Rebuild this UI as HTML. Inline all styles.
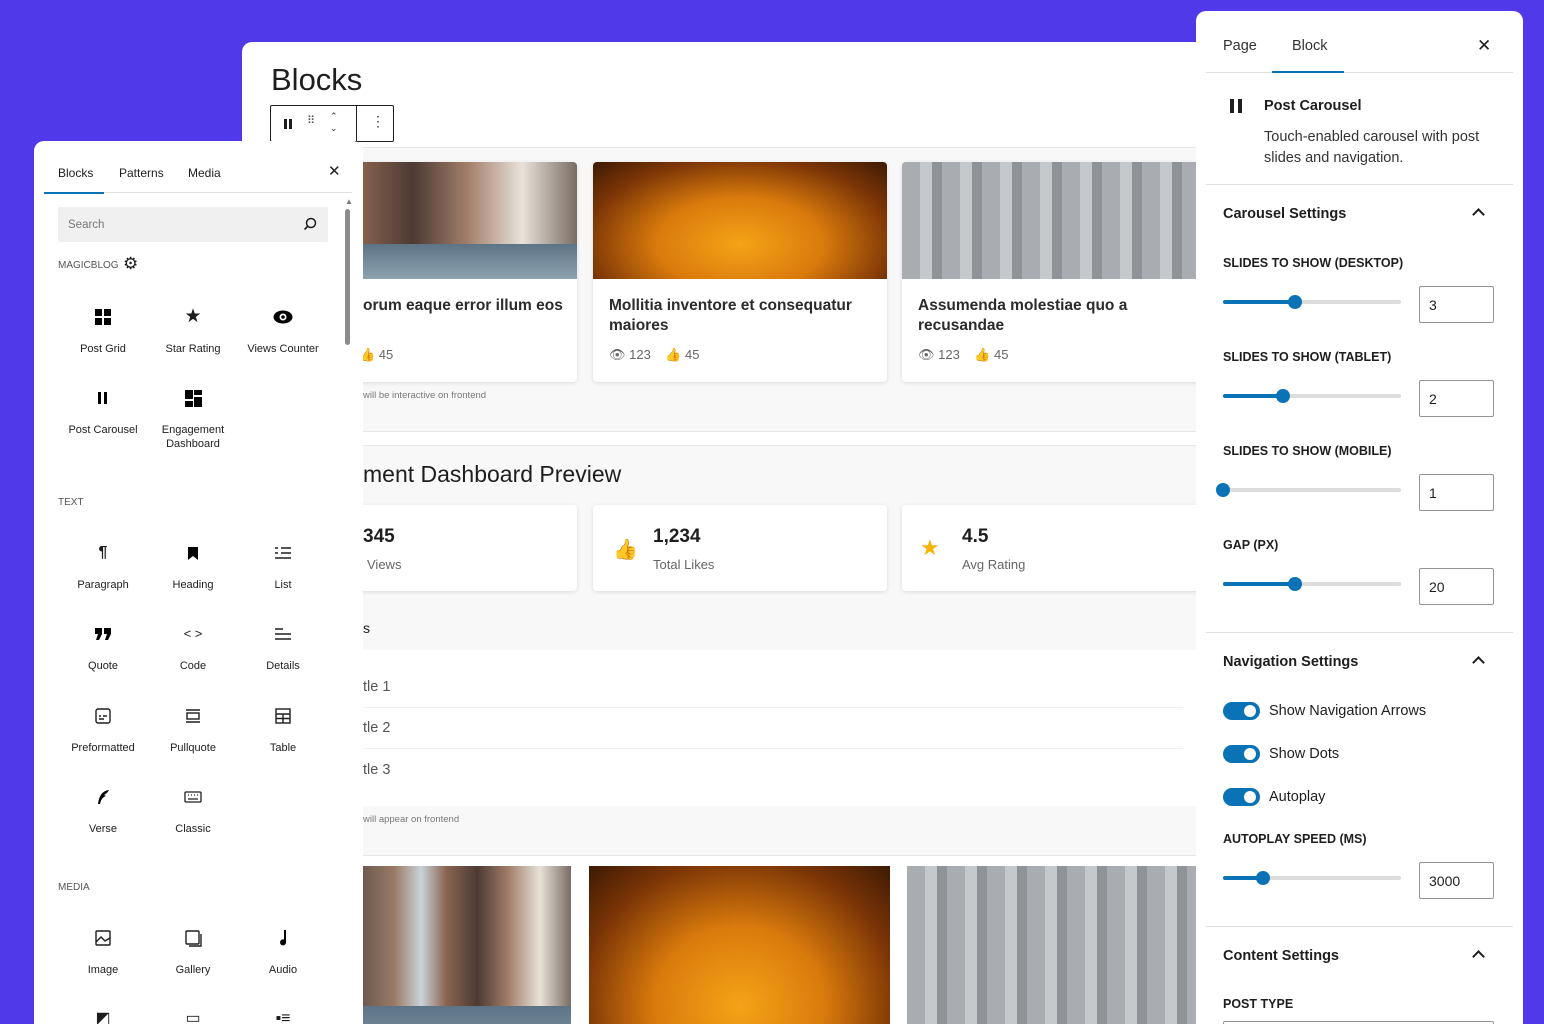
<!DOCTYPE html>
<html><head><meta charset="utf-8"><style>
*{box-sizing:border-box;margin:0;padding:0}
html,body{width:1544px;height:1024px;overflow:hidden}
body{background:#5039e9;font-family:"Liberation Sans",sans-serif;position:relative;color:#1e1e1e}
.a{position:absolute}
#ed{left:242px;top:42px;width:1000px;height:982px;background:#fff;border-radius:10px 0 0 0;overflow:hidden}
.card{position:absolute;background:#fff;border-radius:4px;box-shadow:0 1px 4px rgba(0,0,0,.12);overflow:hidden}
.ct{font-size:15.5px;color:#2b2b2b;line-height:20px;position:absolute;left:16px;top:134px;width:260px;font-weight:600}
.meta{position:absolute;left:16px;top:185px;font-size:13px;color:#666}
.street{background:linear-gradient(90deg,#6d5a4f 0%,#9a7a66 15%,#c9d2d8 28%,#8a6450 40%,#4d3a33 55%,#a27e6a 70%,#e8e2da 85%,#7a6c63 100%)}
.street::after{content:"";position:absolute;left:0;right:0;bottom:0;height:30%;background:linear-gradient(180deg,#5d7486,#8ea2b0)}
.bench{background:radial-gradient(ellipse at 50% 70%,#f5a317 0%,#d97a0c 40%,#7a3406 75%,#3c1a04 100%)}
.wall{background:repeating-linear-gradient(90deg,#a9adb2 0 18px,#c6c9cc 18px 30px,#8f9398 30px 40px),#b5b8bc}
#lp{left:34px;top:141px;width:329px;height:883px;background:#fff;border-radius:10px 10px 0 0;overflow:hidden}
.tab{position:absolute;font-size:12px;color:#1e1e1e}
.blk{position:absolute;width:90px;text-align:center;font-size:11px;color:#1e1e1e;line-height:14px}
.blk .ic{height:22px;display:flex;justify-content:center;align-items:center;margin-bottom:14px;font-size:16px}
.sec{position:absolute;left:24px;font-size:10px;color:#555}
#rp{left:1196px;top:11px;width:327px;height:1013px;background:#fff;border-radius:10px 10px 0 0;overflow:hidden}
.lbl{position:absolute;left:27px;font-size:12.5px;font-weight:600;color:#1e1e1e}
.h{position:absolute;left:27px;font-size:14.5px;font-weight:600;color:#1e1e1e}
.chev{position:absolute;left:278px;width:9px;height:9px;border-left:2px solid #1e1e1e;border-top:2px solid #1e1e1e;transform:rotate(45deg)}
.sl{position:absolute;left:27px;width:178px;height:4px;background:#ddd;border-radius:2px}
.sl i{position:absolute;left:0;top:0;height:4px;background:#0a73b6;border-radius:2px}
.sl b{position:absolute;top:-5px;width:14px;height:14px;border-radius:50%;background:#0a73b6}
.inp{position:absolute;left:223px;width:75px;height:37px;border:1px solid #949494;border-radius:2px;font-size:14px;padding:10px 9px;color:#1e1e1e}
.hr{position:absolute;left:10px;right:10px;height:1px;background:#e0e0e0}
.tg{position:absolute;left:27px;width:37px;height:18px;border-radius:9px;background:#0a73b6}
.tg::after{content:"";position:absolute;right:4px;top:3px;width:12px;height:12px;border-radius:50%;background:#fff}
.tgl{position:absolute;left:73px;font-size:14.5px;color:#1e1e1e}
</style></head><body>

<div id="ed" class="a">
  <div class="a" style="left:29px;top:20px;font-size:31px;color:#1e1e1e;font-weight:500">Blocks</div>
  <div class="a" style="left:28px;top:63px;width:124px;height:37px;border:1px solid #1e1e1e;border-radius:2px;background:#fff">
    <div class="a" style="left:13px;top:13px;width:3px;height:10px;background:#1e1e1e"></div>
    <div class="a" style="left:18px;top:13px;width:3px;height:10px;background:#1e1e1e"></div>
    <div class="a" style="left:36px;top:8px;font-size:11px;color:#555;letter-spacing:-1px">⠿</div>
    <div class="a" style="left:59px;top:4px;font-size:9px;line-height:12px;color:#333">⌃<br>⌄</div>
    <div class="a" style="left:85px;top:0;width:1px;height:35px;background:#1e1e1e"></div>
    <div class="a" style="left:100px;top:7px;font-size:14px;color:#333">⋮</div>
  </div>
  <div class="a" style="left:0;top:105px;width:1000px;height:1px;background:#e6e6e6"></div>
  <div class="a" style="left:0;top:106px;width:1000px;height:283px;background:#f8f8f8"></div>
  <div class="card" style="left:-30px;top:120px;width:365px;height:220px"><div class="a street" style="left:0;top:0;width:365px;height:117px"></div><div class="ct" style="left:151px">orum eaque error illum eos</div><div class="meta" style="left:147px">👍 45</div></div>
  <div class="card" style="left:351px;top:120px;width:294px;height:220px"><div class="a bench" style="left:0;top:0;width:294px;height:117px"></div><div class="ct">Mollitia inventore et consequatur maiores</div><div class="meta">👁 123 &nbsp;&nbsp; 👍 45</div></div>
  <div class="card" style="left:660px;top:120px;width:300px;height:220px"><div class="a wall" style="left:0;top:0;width:300px;height:117px"></div><div class="ct">Assumenda molestiae quo a recusandae</div><div class="meta">👁 123 &nbsp;&nbsp; 👍 45</div></div>
  <div class="a" style="left:121px;top:348px;font-size:9.5px;color:#777">will be interactive on frontend</div>
  <div class="a" style="left:0;top:389px;width:1000px;height:1px;background:#e6e6e6"></div>
  <div class="a" style="left:0;top:403px;width:1000px;height:1px;background:#e6e6e6"></div>
  <div class="a" style="left:0;top:404px;width:1000px;height:204px;background:#f8f8f8"></div>
  <div class="a" style="left:121px;top:419px;font-size:23px;color:#1e1e1e;font-weight:500">ment Dashboard Preview</div>
  <div class="card" style="left:-30px;top:463px;width:365px;height:86px"><div class="a" style="left:151px;top:21px;font-size:19px;font-weight:bold">345</div><div class="a" style="left:155px;top:52px;font-size:13px;color:#666">Views</div></div>
  <div class="card" style="left:351px;top:463px;width:294px;height:86px"><div class="a" style="left:20px;top:32px;font-size:20px">👍</div><div class="a" style="left:60px;top:21px;font-size:19px;font-weight:bold">1,234</div><div class="a" style="left:60px;top:52px;font-size:13px;color:#666">Total Likes</div></div>
  <div class="card" style="left:660px;top:463px;width:300px;height:86px"><div class="a" style="left:18px;top:30px;font-size:22px;color:#f5b500">★</div><div class="a" style="left:60px;top:21px;font-size:19px;font-weight:bold">4.5</div><div class="a" style="left:60px;top:52px;font-size:13px;color:#666">Avg Rating</div></div>
  <div class="a" style="left:121px;top:578px;font-size:14px">s</div>
  <div class="a" style="left:121px;top:637px;font-size:14.5px;color:#555">tle 1</div>
  <div class="a" style="left:121px;top:665px;width:820px;height:1px;background:#f0f0f0"></div>
  <div class="a" style="left:121px;top:678px;font-size:14.5px;color:#555">tle 2</div>
  <div class="a" style="left:121px;top:706px;width:820px;height:1px;background:#f0f0f0"></div>
  <div class="a" style="left:121px;top:720px;font-size:14.5px;color:#555">tle 3</div>
  <div class="a" style="left:0;top:764px;width:1000px;height:50px;background:#f8f8f8"></div>
  <div class="a" style="left:121px;top:772px;font-size:9.5px;color:#777">will appear on frontend</div>
  <div class="a" style="left:0;top:813px;width:1000px;height:1px;background:#e6e6e6"></div>
  <div class="a street" style="left:121px;top:824px;width:208px;height:200px"></div>
  <div class="a bench" style="left:347px;top:824px;width:301px;height:200px"></div>
  <div class="a wall" style="left:665px;top:824px;width:300px;height:200px"></div>
</div>

<div id="lp" class="a">
  <div class="tab" style="left:24px;top:25px">Blocks</div>
  <div class="tab" style="left:85px;top:25px">Patterns</div>
  <div class="tab" style="left:154px;top:25px">Media</div>
  <div class="tab" style="left:294px;top:21px;font-size:15px">✕</div>
  <div class="a" style="left:10px;top:51px;width:308px;height:1px;background:#e0e0e0"></div>
  <div class="a" style="left:10px;top:51px;width:60px;height:2px;background:#0a73b6"></div>
  <div class="a" style="left:311px;top:56px;font-size:8px;color:#777">▲</div>
  <div class="a" style="left:311px;top:68px;width:5px;height:136px;background:#8c8c8c;border-radius:3px"></div>
  <div class="a" style="left:24px;top:66px;width:270px;height:35px;background:#f0f0f0;border-radius:2px"></div>
  <div class="a" style="left:34px;top:78px;font-size:11.5px;color:#777">Search</div>
  <svg class="a" style="left:269px;top:76px" width="14" height="14" viewBox="0 0 14 14"><circle cx="8" cy="6" r="4.5" fill="none" stroke="#1e1e1e" stroke-width="1.5"/><path d="M5 9L1.5 12.5" stroke="#1e1e1e" stroke-width="1.6"/></svg>
  <div class="sec" style="top:119px">MAGICBLOG</div>
  <div class="a" style="left:89px;top:114px;font-size:17px;line-height:17px">⚙</div>
  <div class="blk" style="left:24px;top:165px"><div class="ic"><svg width="16" height="16"><rect x="0" y="0" width="7" height="7"/><rect x="9" y="0" width="7" height="7"/><rect x="0" y="9" width="7" height="7"/><rect x="9" y="9" width="7" height="7"/></svg></div>Post Grid</div>
  <div class="blk" style="left:114px;top:165px"><div class="ic" style="font-size:19px">★</div>Star Rating</div>
  <div class="blk" style="left:204px;top:165px"><div class="ic"><svg width="20" height="14"><ellipse cx="10" cy="7" rx="9.5" ry="6.5"/><circle cx="10" cy="7" r="3.5" fill="#fff"/><circle cx="10" cy="7" r="1.8"/></svg></div>Views Counter</div>
  <div class="blk" style="left:24px;top:246px"><div class="ic"><svg width="12" height="14"><rect x="1" y="1" width="3" height="12"/><rect x="7" y="1" width="3" height="12"/></svg></div>Post Carousel</div>
  <div class="blk" style="left:114px;top:246px"><div class="ic"><svg width="17" height="17"><rect x="0" y="0" width="8" height="9"/><rect x="9" y="0" width="8" height="5"/><rect x="0" y="11" width="8" height="6"/><rect x="9" y="7" width="8" height="10"/></svg></div>Engagement<br>Dashboard</div>
  <div class="sec" style="top:356px">TEXT</div>
  <div class="blk" style="left:24px;top:401px"><div class="ic" style="font-weight:bold">¶</div>Paragraph</div>
  <div class="blk" style="left:114px;top:401px"><div class="ic"><svg width="10" height="13"><path d="M0 0H10V13L5 9L0 13Z"/></svg></div>Heading</div>
  <div class="blk" style="left:204px;top:401px"><div class="ic"><svg width="16" height="14" stroke="#1e1e1e" stroke-width="1.5"><path d="M0 2H3M6 2H16M0 7H3M6 7H16M0 12H16"/></svg></div>List</div>
  <div class="blk" style="left:24px;top:482px"><div class="ic"><svg width="16" height="12"><path d="M0 0H7V6L4 12H1L3 6H0Z"/><path d="M9 0H16V6L13 12H10L12 6H9Z"/></svg></div>Quote</div>
  <div class="blk" style="left:114px;top:482px"><div class="ic" style="font-size:13px">&lt; &gt;</div>Code</div>
  <div class="blk" style="left:204px;top:482px"><div class="ic"><svg width="16" height="12" stroke="#1e1e1e" stroke-width="1.5"><path d="M0 1H8M0 6H16M0 11H16"/></svg></div>Details</div>
  <div class="blk" style="left:24px;top:564px"><div class="ic"><svg width="16" height="16" fill="none" stroke="#1e1e1e" stroke-width="1.4"><rect x="1" y="1" width="14" height="14" rx="2"/><path d="M4 8H6M8 8H12M4 11H9"/></svg></div>Preformatted</div>
  <div class="blk" style="left:114px;top:564px"><div class="ic"><svg width="16" height="16" fill="none" stroke="#1e1e1e" stroke-width="1.4"><path d="M1 2H15M1 14H15"/><rect x="2" y="5" width="12" height="6"/></svg></div>Pullquote</div>
  <div class="blk" style="left:204px;top:564px"><div class="ic"><svg width="16" height="16" fill="none" stroke="#1e1e1e" stroke-width="1.4"><rect x="1" y="1" width="14" height="14"/><path d="M1 6H15M1 10.5H15M8 6V15"/></svg></div>Table</div>
  <div class="blk" style="left:24px;top:645px"><div class="ic"><svg width="14" height="16"><path d="M13 1C6 2 3 7 2 15L4 15C5 10 7 8 10 7L8 6C10 5 12 3 13 1Z"/></svg></div>Verse</div>
  <div class="blk" style="left:114px;top:645px"><div class="ic"><svg width="18" height="12" fill="none" stroke="#1e1e1e" stroke-width="1.3"><rect x="1" y="1" width="16" height="10" rx="1"/><path d="M4 4H5M7 4H8M10 4H11M13 4H14M4 8H14"/></svg></div>Classic</div>
  <div class="sec" style="top:741px">MEDIA</div>
  <div class="blk" style="left:24px;top:786px"><div class="ic"><svg width="16" height="16" fill="none" stroke="#1e1e1e" stroke-width="1.4"><rect x="1" y="1" width="14" height="14" rx="1"/><path d="M1 12L6 7L10 11L15 8"/></svg></div>Image</div>
  <div class="blk" style="left:114px;top:786px"><div class="ic"><svg width="17" height="17" fill="none" stroke="#1e1e1e" stroke-width="1.4"><rect x="1" y="1" width="13" height="13" rx="1"/><path d="M4 16H16V4"/></svg></div>Gallery</div>
  <div class="blk" style="left:204px;top:786px"><div class="ic"><svg width="10" height="16"><path d="M6 0H8V12A3 3 0 1 1 6 9.5Z"/></svg></div>Audio</div>
  <div class="blk" style="left:24px;top:867px"><div class="ic">◩</div></div>
  <div class="blk" style="left:114px;top:867px"><div class="ic">▭</div></div>
  <div class="blk" style="left:204px;top:867px"><div class="ic">▪≡</div></div>
</div>

<div id="rp" class="a">
  <div class="a" style="left:27px;top:27px;font-size:14.5px;color:#333">Page</div>
  <div class="a" style="left:96px;top:27px;font-size:14.5px;color:#333">Block</div>
  <div class="a" style="left:281px;top:25px;font-size:17px">✕</div>
  <div class="hr" style="top:61px"></div>
  <div class="a" style="left:76px;top:60px;width:72px;height:2px;background:#0a73b6"></div>
  <div class="a" style="left:34px;top:88px;width:4px;height:14px;background:#1e1e1e"></div>
  <div class="a" style="left:42px;top:88px;width:4px;height:14px;background:#1e1e1e"></div>
  <div class="a" style="left:68px;top:87px;font-size:14.5px;font-weight:600">Post Carousel</div>
  <div class="a" style="left:68px;top:116px;width:240px;font-size:14.5px;line-height:21px;color:#333">Touch-enabled carousel with post slides and navigation.</div>
  <div class="hr" style="top:173px"></div>
  <div class="h" style="top:195px">Carousel Settings</div><div class="chev" style="top:199px"></div>
  <div class="lbl" style="top:245px">SLIDES TO SHOW (DESKTOP)</div>
  <div class="sl" style="top:289px"><i style="width:72px"></i><b style="left:65px"></b></div>
  <div class="inp" style="top:275px">3</div>
  <div class="lbl" style="top:339px">SLIDES TO SHOW (TABLET)</div>
  <div class="sl" style="top:383px"><i style="width:60px"></i><b style="left:53px"></b></div>
  <div class="inp" style="top:369px">2</div>
  <div class="lbl" style="top:433px">SLIDES TO SHOW (MOBILE)</div>
  <div class="sl" style="top:477px"><b style="left:-7px"></b></div>
  <div class="inp" style="top:463px">1</div>
  <div class="lbl" style="top:527px">GAP (PX)</div>
  <div class="sl" style="top:571px"><i style="width:72px"></i><b style="left:65px"></b></div>
  <div class="inp" style="top:557px">20</div>
  <div class="hr" style="top:621px"></div>
  <div class="h" style="top:643px">Navigation Settings</div><div class="chev" style="top:647px"></div>
  <div class="tg" style="top:691px"></div><div class="tgl" style="top:692px">Show Navigation Arrows</div>
  <div class="tg" style="top:734px"></div><div class="tgl" style="top:735px">Show Dots</div>
  <div class="tg" style="top:777px"></div><div class="tgl" style="top:778px">Autoplay</div>
  <div class="lbl" style="top:821px">AUTOPLAY SPEED (MS)</div>
  <div class="sl" style="top:865px"><i style="width:40px"></i><b style="left:33px"></b></div>
  <div class="inp" style="top:851px">3000</div>
  <div class="hr" style="top:915px"></div>
  <div class="h" style="top:937px">Content Settings</div><div class="chev" style="top:941px"></div>
  <div class="lbl" style="top:986px">POST TYPE</div>
  <div class="a" style="left:27px;top:1010px;width:271px;height:30px;border:1px solid #949494;border-radius:2px"></div>
</div>
</body></html>
